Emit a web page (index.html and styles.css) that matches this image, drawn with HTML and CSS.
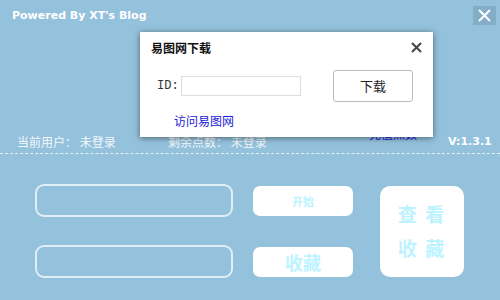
FILE: index.html
```html
<!DOCTYPE html>
<html lang="zh-CN">
<head>
  <meta charset="UTF-8"/>
  <title>XT's Blog</title>
  <link rel="stylesheet" href="styles.css">
</head>
<body>
  <div class="window">
    <div class="titlebar">
      <span class="title">Powered By XT's Blog</span>
      <button class="win-close">
        <svg width="13" height="13" viewBox="0 0 13 13"><path d="M1 1L12 12M12 1L1 12" stroke="#fff" stroke-width="2"/></svg>
      </button>
    </div>

    <div class="info">
      <span>当前用户： 未登录</span>
      <span>剩余点数： 未登录</span>
      <a class="recharge">充值点数</a>
      <span class="version">V:1.3.1</span>
    </div>

    <div class="controls">
      <div class="field"></div>
      <button class="btn btn-start">开始</button>
      <button class="btn btn-view">查&nbsp;看<br>收&nbsp;藏</button>
      <div class="field"></div>
      <button class="btn btn-fav">收藏</button>
    </div>

    <div class="dialog">
      <div class="dialog-head">
        <span class="dialog-title">易图网下载</span>
        <svg class="dialog-close" width="11" height="11" viewBox="0 0 11 11"><path d="M1 1L10 10M10 1L1 10" stroke="#444" stroke-width="2"/></svg>
      </div>
      <div class="dialog-row">
        <label class="id-label">ID:</label>
        <input class="id-input" type="text"/>
        <button class="dl-btn">下载</button>
      </div>
      <a class="visit">访问易图网</a>
    </div>
  </div>
</body>
</html>
```

FILE: styles.css
```css
body { margin:0; padding:0; font-family: "Noto Sans CJK SC", "Noto Sans", sans-serif; }
.window { position:relative; width:500px; height:300px; background:#94c1dc; overflow:hidden; }

.titlebar { display:flex; justify-content:space-between; align-items:flex-start; height:32px; padding:0 4px 0 12px; }
.title { margin-top:9px; font-family:"DejaVu Sans", sans-serif; font-weight:bold; font-size:11px; color:#fff; }
.win-close { margin-top:6px; width:23px; height:19px; padding:0; border:none; background:#84aec7; display:flex; align-items:center; justify-content:center; }

.info { display:grid; grid-template-columns:151px 201px 79px auto; align-items:center; height:23px; margin-top:98px; padding-left:17px; font-size:12px; color:#f2f8fb; border-bottom:1px dashed #e4f0f6; }
.recharge { color:#1a1adb; font-size:12px; margin-top:-16px; }
.version { font-family:"DejaVu Sans", sans-serif; font-weight:bold; font-size:11px; color:#fff; }

.controls { display:grid; grid-template-columns:198px 100px 91px; grid-template-rows:33px 33px; column-gap:20px; row-gap:28px; padding:30px 0 0 35px; }
.field { border:2px solid #e2eef5; border-radius:9px; box-sizing:border-box; }
.btn { border:none; background:#fff; color:#bdf3ff; font-family:inherit; font-weight:bold; padding:0; cursor:pointer; }
.btn-start { height:30px; align-self:center; border-radius:7px; font-size:11px; }
.btn-fav { height:30px; align-self:center; border-radius:7px; font-size:18px; }
.btn-view { grid-column:3; grid-row:1 / span 2; margin-left:7px; height:91px; align-self:center; border-radius:10px; font-size:19px; line-height:34px; letter-spacing:2px; }

.dialog { position:absolute; left:140px; top:32px; width:293px; height:105px; background:#fff; box-shadow:0 1px 6px rgba(0,0,0,0.5); box-sizing:border-box; padding:6px 11px 0 11px; }
.dialog-head { display:flex; justify-content:space-between; align-items:center; height:18px; }
.dialog-title { font-weight:bold; font-size:12px; color:#111; }
.dialog-row { display:flex; align-items:center; margin-top:14px; height:31px; }
.id-label { font-family:"Liberation Mono", monospace; font-size:12px; color:#333; margin-left:6px; width:24px; }
.id-input { width:120px; height:20px; box-sizing:border-box; border:1px solid #ddd; padding:0; }
.dl-btn { margin-left:32px; width:80px; height:32px; border:1px solid #bbb; border-radius:3px; background:#fff; font-family:inherit; font-size:13px; color:#222; }
.visit { display:block; margin:11px 0 0 23px; font-size:12px; color:#1a1adb; }
```
